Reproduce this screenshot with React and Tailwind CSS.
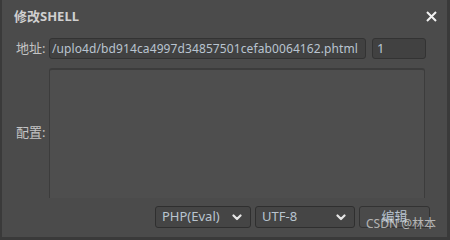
import React from 'react';

const Chevron = () => (
    <svg width="10" height="7" viewBox="0 0 10 7" fill="none" stroke="#e6e6e6" strokeWidth="2.2" strokeLinecap="round" strokeLinejoin="round"><path d="M1.5 1.5L5 5l3.5-3.5" /></svg>
);

const Select = ({ value, width }) => (
    <div className={`${width} h-[22px] flex items-center justify-between pl-[6px] pr-[8px] bg-[#454545] border border-[#2f2f2f] rounded-[3px] text-[13px] text-[#b9c4d0]`}>
        <span>{value}</span>
        <Chevron />
    </div>
);

export default function App() {
    return (
        <div className="w-[450px] h-[240px] bg-[#4b4b4b] border-l-2 border-r-[3px] border-b-[3px] border-[#3a3a3a] relative overflow-hidden" style={{ fontFamily: '"Noto Sans", "Noto Sans CJK SC", sans-serif' }}>
            {/* title bar */}
            <div className="flex items-center justify-between h-[33px] pl-[12px] pr-[10px]">
                <span className="text-[13px] font-bold text-[#d0d0d0]">修改SHELL</span>
                <svg width="11" height="11" viewBox="0 0 11 11" stroke="#f2f2f2" strokeWidth="2"><path d="M1 1l9 9M10 1l-9 9" /></svg>
            </div>

            {/* address row */}
            <div className="flex items-center gap-[3px] mt-[5px] pl-[14px]">
                <span className="w-[30px] shrink-0 whitespace-nowrap text-[13px] text-[#c4c4c4]">地址:</span>
                <div className="w-[317px] h-[21px] mr-[3px] flex items-center px-[2px] bg-[#414141] border border-[#333] rounded-[3px] text-[12px] tracking-[0.1px] text-[#b9c4d0] whitespace-nowrap overflow-hidden">/uplo4d/bd914ca4997d34857501cefab0064162.phtml</div>
                <div className="w-[54px] h-[21px] flex items-center px-[4px] bg-[#414141] border border-[#333] rounded-[3px] text-[13px] text-[#b9c4d0]">1</div>
            </div>

            {/* config row */}
            <div className="flex items-center gap-[3px] mt-[9px] pl-[14px]">
                <span className="w-[30px] shrink-0 whitespace-nowrap text-[13px] text-[#c4c4c4]">配置:</span>
                <div className="w-[376px] h-[130px] bg-[#4e4e4e] border-t-2 border-x border-[#3c3c3c] rounded-t-[3px]" />
            </div>

            {/* bottom row */}
            <div className="flex items-center justify-end gap-[4px] mt-[8px] pr-[17px]">
                <Select value="PHP(Eval)" width="w-[96px]" />
                <Select value="UTF-8" width="w-[100px]" />
                <div className="w-[71px] h-[22px] flex items-center justify-center bg-[#4a4a4a] border border-[#333] rounded-[3px] text-[13px] text-[#b9c4d0]">编辑</div>
            </div>

            {/* watermark */}
            <span className="absolute left-[364px] top-[215px] text-[12px] text-white/60">CSDN @林本</span>
        </div>
    );
}
